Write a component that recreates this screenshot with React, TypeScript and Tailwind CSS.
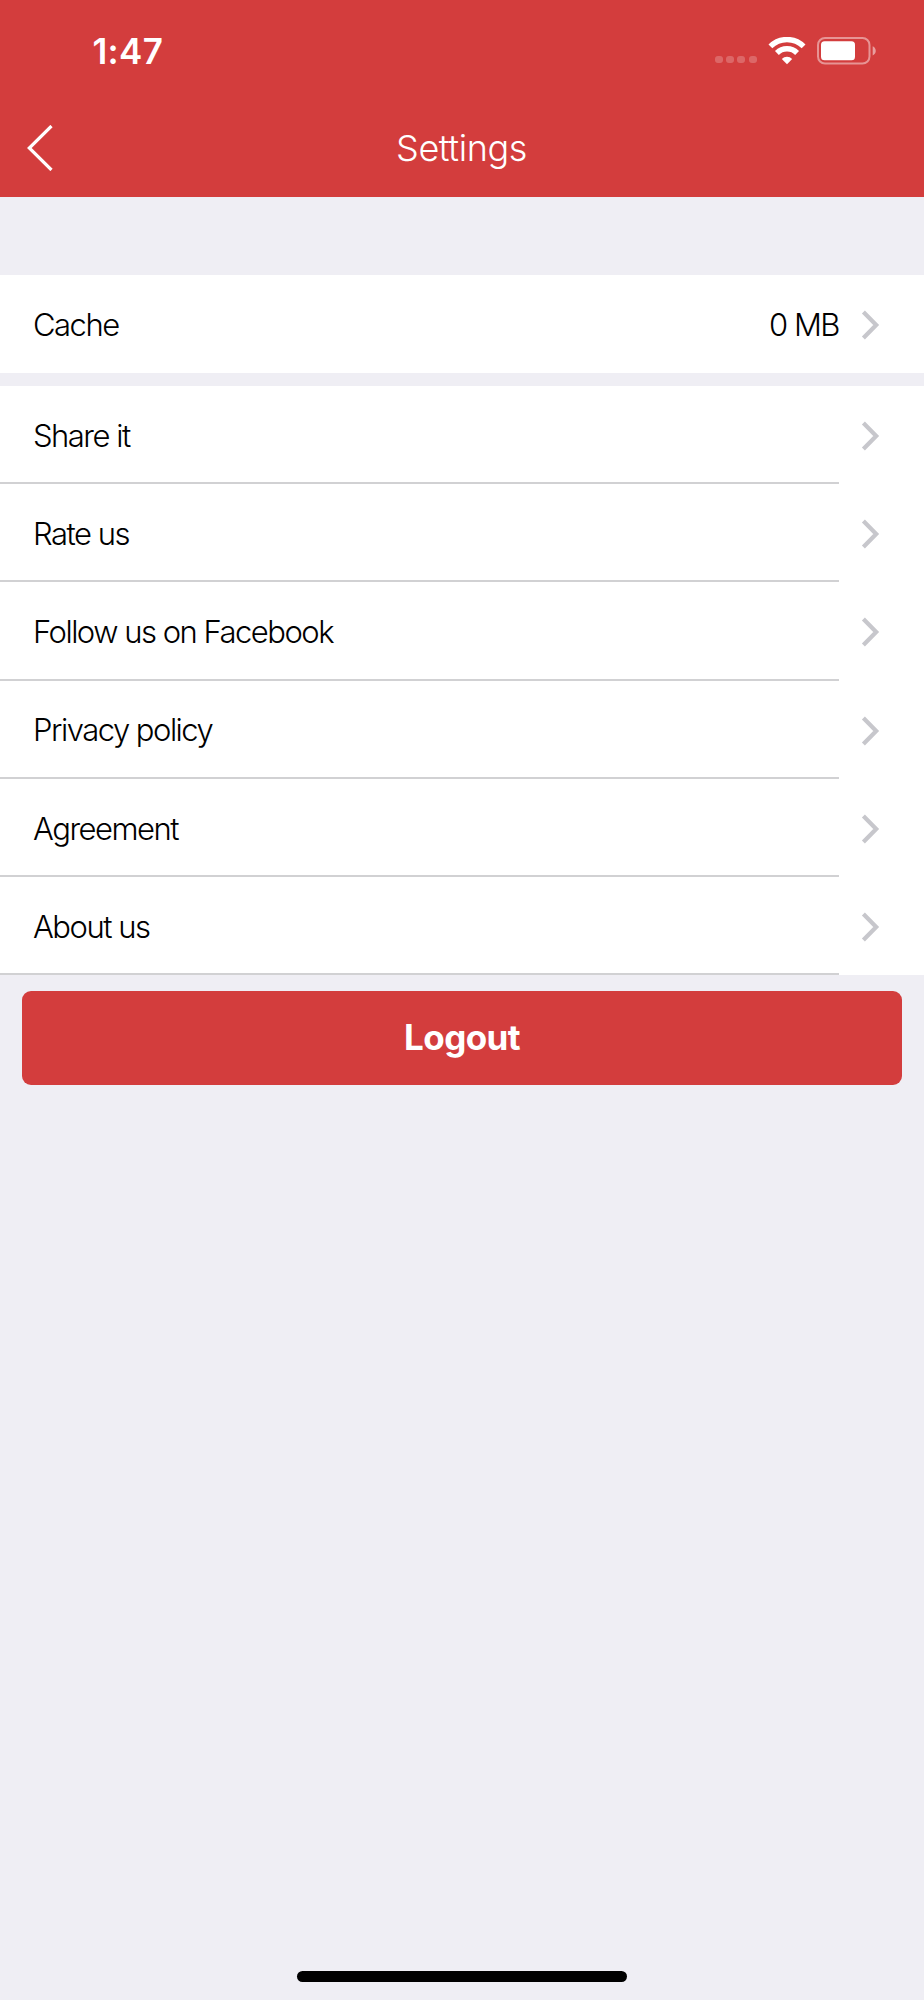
import React from 'react'

interface SettingsItem {
  id: string
  label: string
}

const items: SettingsItem[] = [
  { id: 'share', label: 'Share it' },
  { id: 'rate', label: 'Rate us' },
  { id: 'facebook', label: 'Follow us on Facebook' },
  { id: 'privacy', label: 'Privacy policy' },
  { id: 'agreement', label: 'Agreement' },
  { id: 'about', label: 'About us' },
]

const Chevron = () => (
  <svg width="20" height="30" viewBox="0 0 20 30" fill="none" className="shrink-0 mt-[2px]">
    <path d="M2.4 2 L15.2 15 L2.4 28" stroke="#c7c7cc" strokeWidth="4.2" />
  </svg>
)

const StatusIcons = () => (
  <div className="flex items-center">
    <div className="flex gap-[3.2px] mt-[19px]">
      {[0, 1, 2, 3].map((i) => (
        <span key={i} className="w-2 h-[7.5px] rounded-[3px] bg-white/22" />
      ))}
    </div>
    <svg width="38" height="28" viewBox="0 0 38 28" className="ml-[11px] mt-px" fill="none">
      <path d="M2.4 9.4 A23.5 23.5 0 0 1 35.6 9.4" stroke="#fff" strokeWidth="5.4" />
      <path d="M8.9 16 A14.2 14.2 0 0 1 29.1 16" stroke="#fff" strokeWidth="5.4" />
      <path d="M19 27.2 L13.8 22 A7.4 7.4 0 0 1 24.2 22 Z" fill="#fff" />
    </svg>
    <svg width="60" height="28" viewBox="0 0 60 28" className="ml-[11px] mt-px" fill="none">
      <rect x="1" y="1" width="51.5" height="25.5" rx="7" stroke="#fff" strokeOpacity="0.45" strokeWidth="2" />
      <rect x="4" y="4.3" width="34" height="19" rx="3.5" fill="#fff" />
      <path d="M55.7 9.3 C59.8 11 59.8 16.7 55.7 18.4 Z" fill="#fff" fillOpacity="0.5" />
    </svg>
  </div>
)

export default function App() {
  return (
    <div className="w-[924px] h-[2000px] flex flex-col bg-[#efeef4] font-['Inter',sans-serif] text-black overflow-hidden">
      {/* Header */}
      <header className="h-[196.5px] shrink-0 bg-[#d33d3d] text-white flex flex-col">
        <div className="h-[100px] flex items-center justify-between pl-[92.5px] pr-[47.5px]">
          <span className="pt-[3px] text-[35px] leading-none font-semibold tracking-[0.3px]">1:47</span>
          <StatusIcons />
        </div>
        <div className="h-[95px] grid grid-cols-[100px_1fr_100px] items-center">
          <button className="pl-[26px]">
            <svg width="28" height="46" viewBox="0 0 28 46" fill="none">
              <path d="M25.5 1 L3.3 23 L25.5 45" stroke="#fff" strokeWidth="3.2" />
            </svg>
          </button>
          <h1 className="pr-px text-center text-[36px] leading-none font-light tracking-[-0.4px]">Settings</h1>
        </div>
      </header>

      <main className="pt-[78px]">
        <div className="h-[98.5px] bg-white flex items-center justify-between pl-[33px] pr-[43.5px] text-[31px] font-light">
          <span className="pt-[2px] tracking-[-1.5px]">Cache</span>
          <div className="flex items-center gap-[21.5px]">
            <span className="pt-[2px] tracking-[-1.5px]">0 MB</span>
            <Chevron />
          </div>
        </div>

        {/* Links */}
        <ul className="mt-[13px] bg-white">
          {items.map((item) => (
            <li key={item.id} className="h-[98.2px] flex items-center pr-[43.5px]">
              <div className="h-full flex-1 mr-[21.5px] flex items-center pl-[33px] border-b-2 border-[#d1d1d3]">
                <span className="pt-[4px] text-[31px] font-light tracking-[-1.5px]">{item.label}</span>
              </div>
              <Chevron />
            </li>
          ))}
        </ul>

        <div className="px-[22.3px] pt-[15.8px]">
          <button className="w-full h-[93.6px] rounded-[9px] bg-[#d33d3d] text-white text-[35px] font-bold tracking-[-0.6px]">
            Logout
          </button>
        </div>
      </main>

      {/* Home indicator */}
      <div className="mt-auto mb-[18px] mx-auto w-[330px] h-[11px] rounded-full bg-black" />
    </div>
  )
}
